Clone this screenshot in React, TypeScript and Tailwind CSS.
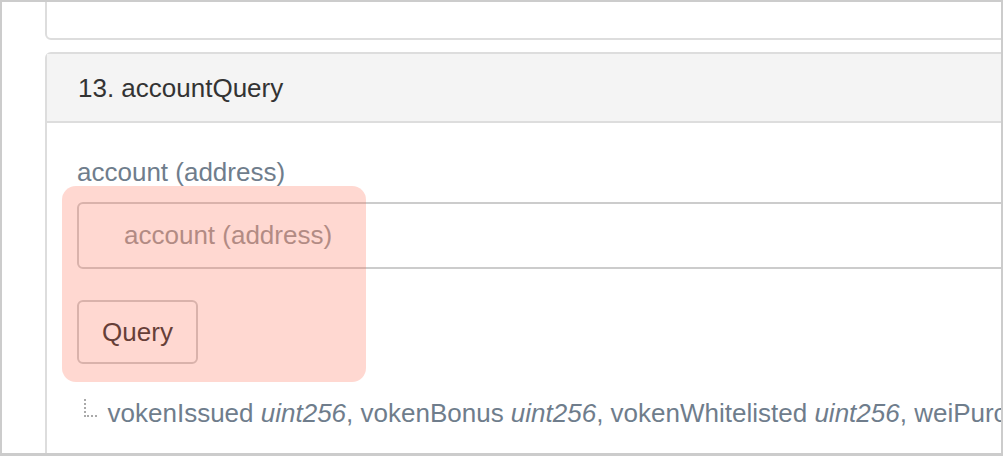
export default function App() {
  return (
    <div
      className="relative w-[1003px] h-[456px] overflow-hidden border-2 border-b-[3px] border-[#cccccc] bg-white text-[26px]"
      style={{ fontFamily: '"Liberation Sans", Arial, sans-serif' }}
    >
      <div className="pl-[43px] w-[1200px]">
        {/* previous card, mostly scrolled out of view */}
        <div className="-mt-[22px] h-[60px] rounded-md border-2 border-[#dddddd] bg-white" />

        <div className="mt-[12px] rounded-md border-2 border-[#dddddd] bg-white">
          <div className="flex h-[69px] items-center border-b-2 border-[#dddddd] bg-[#f4f4f4] px-[31px] pt-[2px] text-[#333333]">
            13. accountQuery
          </div>

          <div className="px-[30px] pt-[31px] pb-[40px]">
            <label className="block leading-[36px] text-[#6f7d8c]">account (address)</label>
            <input
              placeholder="account (address)"
              className="mt-[12px] block h-[67px] w-full rounded-md border-2 border-[#cccccc] pl-[45px] text-[26px] text-[#333333] placeholder:text-[#999999] outline-none"
            />
            <button className="mt-[31px] block h-[64px] w-[121px] rounded-md border-2 border-[#cccccc] bg-white text-[#333333]">
              Query
            </button>
            <div className="mt-[31px] flex items-center leading-[36px] text-[#6f7d8c]">
              <span className="mb-[10px] ml-[7px] mr-[11px] inline-block h-[18px] w-[17px] border-b-2 border-l-2 border-dotted border-[#aaaaaa]" />
              <span className="whitespace-nowrap">
                vokenIssued <i>uint256</i>, vokenBonus <i>uint256</i>, vokenWhitelisted <i>uint256</i>, weiPurchased <i>uint256</i>
              </span>
            </div>
          </div>
        </div>
      </div>

      {/* highlight overlay */}
      <div className="pointer-events-none absolute left-[60px] top-[184px] h-[196px] w-[304px] rounded-[14px] bg-[rgba(255,99,71,0.25)]" />
    </div>
  );
}
